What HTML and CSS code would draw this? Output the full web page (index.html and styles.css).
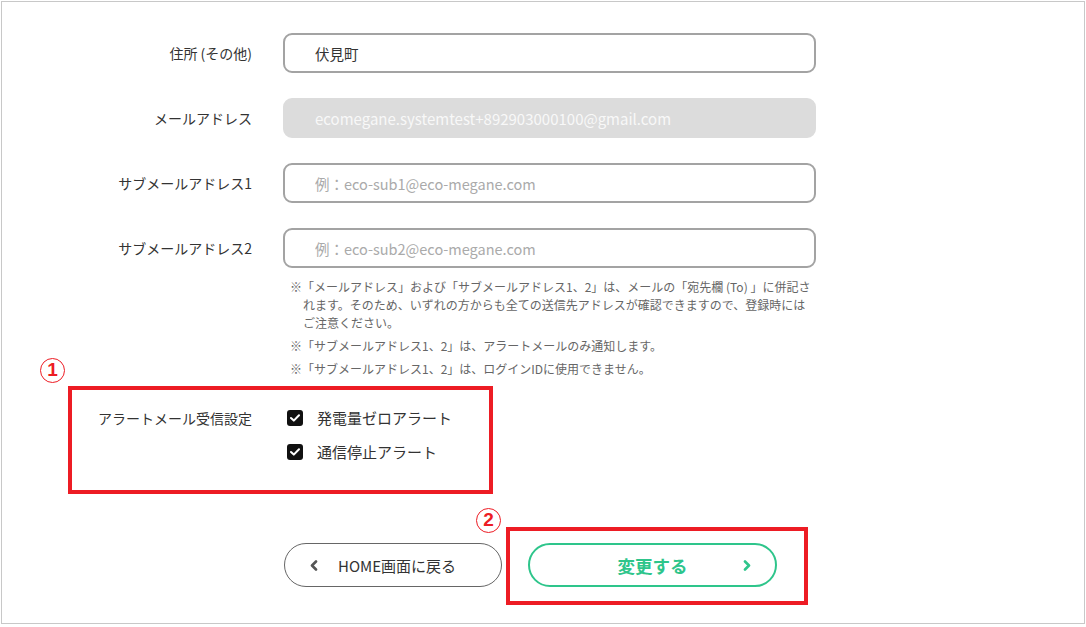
FILE: index.html
```html
<!DOCTYPE html>
<html lang="ja">
<head>
    <meta charset="UTF-8">
    <title>登録情報の変更</title>
    <link rel="stylesheet" href="styles.css">
</head>
<body>
    <div class="page">
        <form class="form">
            <div class="row">
                <label class="label">住所 (その他)</label>
                <input class="field" type="text" value="伏見町">
            </div>
            <div class="row">
                <label class="label">メールアドレス</label>
                <input class="field" type="text" value="ecomegane.systemtest+892903000100@gmail.com" disabled>
            </div>
            <div class="row">
                <label class="label">サブメールアドレス1</label>
                <input class="field" type="text" placeholder="例：eco-sub1@eco-megane.com">
            </div>
            <div class="row">
                <label class="label">サブメールアドレス2</label>
                <input class="field" type="text" placeholder="例：eco-sub2@eco-megane.com">
            </div>
            <div class="notes">
                <p>※「メールアドレス」および「サブメールアドレス1、2」は、メールの「宛先欄 (To) 」に併記さ<br>れます。そのため、いずれの方からも全ての送信先アドレスが確認できますので、登録時には<br>ご注意ください。</p>
                <p>※「サブメールアドレス1、2」は、アラートメールのみ通知します。</p>
                <p>※「サブメールアドレス1、2」は、ログインIDに使用できません。</p>
            </div>
            <div class="row alert-row">
                <div class="mark mark-1"><span class="num">1</span></div>
                <label class="label">アラートメール受信設定</label>
                <div class="checks">
                    <label class="check">
                        <span class="box"><svg width="10" height="8" viewBox="0 0 10 8"><polyline points="1,4 3.8,6.6 9,1.2" fill="none" stroke="#fff" stroke-width="2" stroke-linecap="round" stroke-linejoin="round"/></svg></span>
                        発電量ゼロアラート
                    </label>
                    <label class="check">
                        <span class="box"><svg width="10" height="8" viewBox="0 0 10 8"><polyline points="1,4 3.8,6.6 9,1.2" fill="none" stroke="#fff" stroke-width="2" stroke-linecap="round" stroke-linejoin="round"/></svg></span>
                        通信停止アラート
                    </label>
                </div>
            </div>
            <div class="buttons">
                <button type="button" class="btn btn-back">
                    <svg width="8" height="11" viewBox="0 0 8 11"><polyline points="6,1.5 2,5.5 6,9.5" fill="none" stroke="#555" stroke-width="2.6" stroke-linecap="round" stroke-linejoin="round"/></svg>
                    HOME画面に戻る
                </button>
                <div class="submit-wrap">
                    <div class="mark mark-2"><span class="num">2</span></div>
                    <button type="submit" class="btn btn-submit">
                        変更する
                        <svg class="arrow" width="8" height="11" viewBox="0 0 8 11"><polyline points="2,1.5 6,5.5 2,9.5" fill="none" stroke="#2ec58b" stroke-width="2.6" stroke-linecap="round" stroke-linejoin="round"/></svg>
                    </button>
                </div>
            </div>
        </form>
    </div>
</body>
</html>
```
FILE: styles.css
```css
body {
    margin: 0;
    background: #fff;
    color: #333;
    font-family: "Noto Sans CJK JP", "Noto Sans", sans-serif;
}
.page {
    box-sizing: border-box;
    width: 1084px;
    height: 623px;
    margin: 1px 0 0 1px;
    border: 1px solid #c8c8c8;
    padding-top: 31px;
}
.row {
    display: grid;
    grid-template-columns: 250px 533px;
    column-gap: 31px;
    align-items: center;
    margin-bottom: 25px;
}
.label {
    text-align: right;
    font-size: 14px;
    color: #333;
}
.field {
    box-sizing: border-box;
    height: 40px;
    padding: 0 30px;
    border: 2px solid #a3a3a3;
    border-radius: 9px;
    font-family: inherit;
    font-size: 14.5px;
    color: #333;
    background: #fff;
    outline: none;
}
.field::placeholder {
    color: #aaa;
}
.field:disabled {
    background: #dcdcdc;
    border-color: #dcdcdc;
    color: #f8f8f8;
    font-size: 15px;
}
.notes {
    margin: -15px 0 0 288px;
    width: 560px;
    font-size: 12px;
    line-height: 18px;
    color: #666;
}
.notes p {
    margin: 0 0 5px;
    padding-left: 13px;
    text-indent: -13px;
}
.alert-row {
    position: relative;
    margin-top: 30px;
    align-items: start;
}
.alert-row .label {
    line-height: 20px;
}
.checks {
    display: flex;
    flex-direction: column;
    gap: 14px;
    padding-left: 4px;
}
.check {
    display: flex;
    align-items: center;
    gap: 14px;
    font-size: 15px;
    line-height: 20px;
}
.box {
    width: 16px;
    height: 16px;
    border-radius: 3px;
    background: #111;
    display: flex;
    align-items: center;
    justify-content: center;
}
.mark {
    position: absolute;
    box-sizing: border-box;
    border: 4px solid #ed1c24;
}
.mark .num {
    position: absolute;
    box-sizing: border-box;
    width: 25px;
    height: 25px;
    border: 1.5px solid #ed1c24;
    border-radius: 50%;
    color: #ed1c24;
    font-family: "Liberation Sans", sans-serif;
    font-weight: bold;
    font-size: 19px;
    line-height: 22px;
    text-align: center;
}
.mark-1 {
    left: 66px;
    top: -22px;
    width: 425px;
    height: 108px;
}
.mark-1 .num {
    left: -32px;
    top: -32px;
}
.buttons {
    display: flex;
    gap: 26px;
    margin: 81px 0 0 282px;
}
.btn {
    box-sizing: border-box;
    height: 44px;
    border-radius: 22px;
    background: #fff;
    font-family: inherit;
    display: flex;
    align-items: center;
    cursor: pointer;
}
.btn-back {
    width: 218px;
    border: 1px solid #666;
    padding: 0 0 0 25px;
    gap: 20px;
    font-size: 15px;
    color: #333;
}
.submit-wrap {
    position: relative;
}
.btn-submit {
    position: relative;
    width: 249px;
    border: 2px solid #2ec58b;
    justify-content: center;
    font-size: 17.5px;
    font-weight: bold;
    color: #2ec58b;
}
.btn-submit .arrow {
    position: absolute;
    right: 24px;
    top: 15px;
}
.mark-2 {
    left: -22px;
    top: -16px;
    width: 302px;
    height: 78px;
}
.mark-2 .num {
    left: -34px;
    top: -23px;
}
```
